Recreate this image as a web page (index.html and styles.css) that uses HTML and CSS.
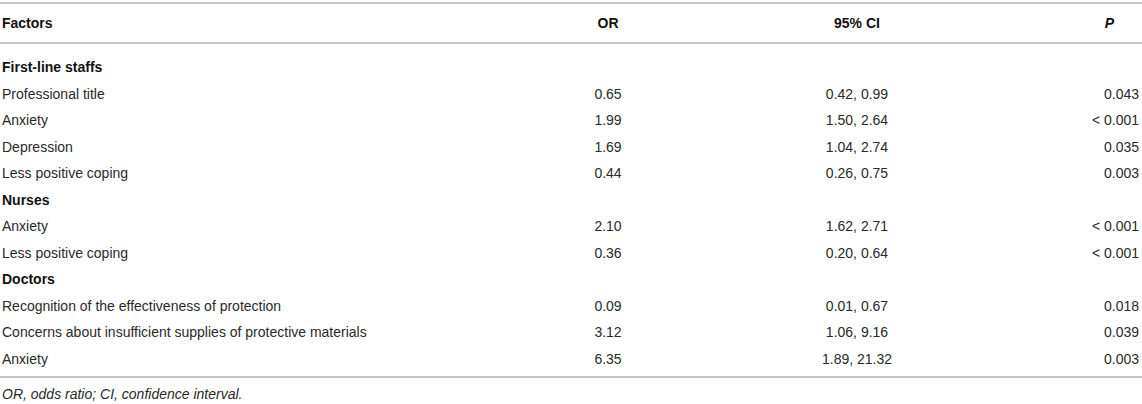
FILE: index.html
```html
<!DOCTYPE html>
<html lang="en">
<head>
<meta charset="utf-8">
<title>Table</title>
<link rel="stylesheet" href="styles.css">
</head>
<body>
<div class="wrap">
<table class="tbl">
  <colgroup>
    <col class="c1"><col class="c2"><col class="c3"><col class="c4">
  </colgroup>
  <thead>
    <tr>
      <th class="left">Factors</th>
      <th class="mid">OR</th>
      <th class="mid">95% CI</th>
      <th class="phead"><i>P</i></th>
    </tr>
  </thead>
  <tbody>
    <tr class="first"><td class="left sec">First-line staffs</td><td></td><td></td><td></td></tr>
    <tr><td class="left">Professional title</td><td class="mid">0.65</td><td class="mid">0.42, 0.99</td><td class="right">0.043</td></tr>
    <tr><td class="left">Anxiety</td><td class="mid">1.99</td><td class="mid">1.50, 2.64</td><td class="right">&lt; 0.001</td></tr>
    <tr><td class="left">Depression</td><td class="mid">1.69</td><td class="mid">1.04, 2.74</td><td class="right">0.035</td></tr>
    <tr><td class="left">Less positive coping</td><td class="mid">0.44</td><td class="mid">0.26, 0.75</td><td class="right">0.003</td></tr>
    <tr><td class="left sec">Nurses</td><td></td><td></td><td></td></tr>
    <tr><td class="left">Anxiety</td><td class="mid">2.10</td><td class="mid">1.62, 2.71</td><td class="right">&lt; 0.001</td></tr>
    <tr><td class="left">Less positive coping</td><td class="mid">0.36</td><td class="mid">0.20, 0.64</td><td class="right">&lt; 0.001</td></tr>
    <tr><td class="left sec">Doctors</td><td></td><td></td><td></td></tr>
    <tr><td class="left">Recognition of the effectiveness of protection</td><td class="mid">0.09</td><td class="mid">0.01, 0.67</td><td class="right">0.018</td></tr>
    <tr><td class="left">Concerns about insufficient supplies of protective materials</td><td class="mid">3.12</td><td class="mid">1.06, 9.16</td><td class="right">0.039</td></tr>
    <tr class="last"><td class="left">Anxiety</td><td class="mid">6.35</td><td class="mid">1.89, 21.32</td><td class="right">0.003</td></tr>
  </tbody>
</table>
<p class="note">OR, odds ratio; CI, confidence interval.</p>
</div>
</body>
</html>
```
FILE: styles.css
```css
html, body {
  margin: 0;
  padding: 0;
  background: #ffffff;
}
body {
  font-family: "Liberation Sans", Arial, sans-serif;
  font-size: 14px;
  color: #2a2a2a;
}
.wrap {
  padding-top: 2px;
  width: 1142px;
}
.tbl {
  width: 1142px;
  border-collapse: collapse;
  table-layout: fixed;
}
.c1 { width: 520px; }
.c2 { width: 176px; }
.c3 { width: 322px; }
.c4 { width: 124px; }
.tbl th {
  font-weight: bold;
  color: #111;
  line-height: 16px;
  padding: 11px 0;
  border-top: 2px solid #c6c6c6;
  border-bottom: 2px solid #c6c6c6;
}
.tbl td {
  line-height: 16.5px;
  padding: 5px 0;
}
.left { text-align: left; padding-left: 2px !important; }
.mid { text-align: center; }
.right { text-align: right; padding-right: 3px !important; }
.phead { text-align: right; padding-right: 28px !important; }
.sec { font-weight: bold; color: #111; }
.tbl tr.first td { padding-top: 15px; }
.tbl tr.last td { padding-bottom: 9px; border-bottom: 2px solid #c6c6c6; }
.note {
  margin: 8px 0 0 0;
  padding-left: 2px;
  font-style: italic;
  line-height: 16px;
  color: #2a2a2a;
}
```
